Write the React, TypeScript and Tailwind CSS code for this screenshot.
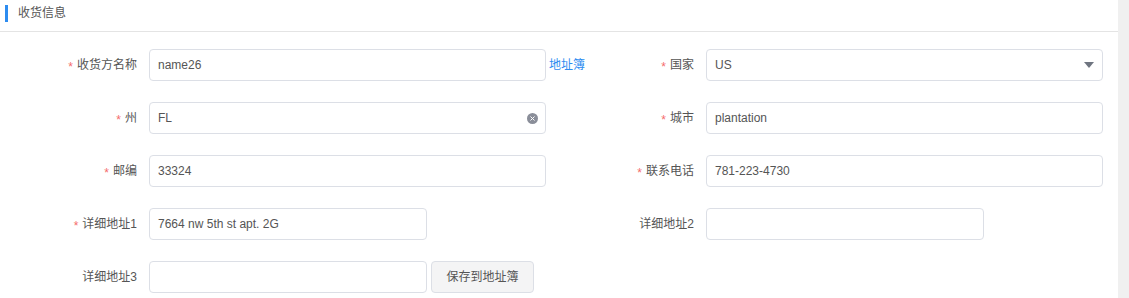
import React from 'react';

const Req = () => (
  <span className="mr-[4px] inline-block translate-y-[2px] text-[12px] leading-none text-[#f56c6c]">*</span>
);

interface FieldProps {
  label: string;
  required?: boolean;
  children: React.ReactNode;
}

const Field: React.FC<FieldProps> = ({ label, required, children }) => (
  <div className="flex h-[32px] items-center">
    <div className="w-[149px] shrink-0 pr-[12px] text-right text-[#555]">
      {required && <Req />}
      {label}
    </div>
    {children}
  </div>
);

const Box: React.FC<{ value?: string; half?: boolean; children?: React.ReactNode }> = ({ value, half, children }) => (
  <div
    className={
      'flex h-[32px] shrink-0 items-center justify-between rounded-[4px] border border-[#dcdfe6] bg-white pl-[8px] pr-[7px] text-[#555] ' +
      (half ? 'w-[278px]' : 'w-[397px]')
    }
  >
    <span>{value}</span>
    {children}
  </div>
);

const App: React.FC = () => {
  return (
    <div className="flex h-[298px] w-full bg-white font-['Liberation_Sans','Noto_Sans_CJK_SC',sans-serif] text-[12px]">
      <div className="min-w-0 flex-1">
        <div className="flex h-[32px] items-start border-b border-[#e4e4e4] pl-[5px] pt-[5px]">
          <div className="h-[17px] w-[3px] bg-[#2d8cf0]" />
          <span className="ml-[10px] leading-[17px] text-[#555]">收货信息</span>
        </div>

        <div className="grid grid-cols-[557px_557px] gap-y-[21px] pt-[17px]">
          <Field label="收货方名称" required>
            <Box value="name26" />
            <a className="ml-[3px] whitespace-nowrap text-[#2d8cf0]">地址簿</a>
          </Field>
          <Field label="国家" required>
            <Box value="US">
              <svg width="10" height="6" viewBox="0 0 10 6" className="mr-[1px]">
                <polygon points="0,0 10,0 5,6" fill="#6f7580" />
              </svg>
            </Box>
          </Field>

          <Field label="州" required>
            <Box value="FL">
              <span className="flex h-[11px] w-[11px] items-center justify-center rounded-full bg-[#8a8e99]">
                <svg width="5" height="5" viewBox="0 0 5 5">
                  <path d="M0.5 0.5 L4.5 4.5 M4.5 0.5 L0.5 4.5" stroke="#fff" strokeWidth="1" />
                </svg>
              </span>
            </Box>
          </Field>
          <Field label="城市" required>
            <Box value="plantation" />
          </Field>

          <Field label="邮编" required>
            <Box value="33324" />
          </Field>
          <Field label="联系电话" required>
            <Box value="781-223-4730" />
          </Field>

          <Field label="详细地址1" required>
            <Box value="7664 nw 5th st apt. 2G" half />
          </Field>
          <Field label="详细地址2">
            <Box half />
          </Field>

          <Field label="详细地址3">
            <Box half />
            <button className="ml-[4px] h-[32px] w-[103px] shrink-0 rounded-[4px] border border-[#dcdfe6] bg-[#f4f4f5] text-[12px] text-[#555]">
              保存到地址簿
            </button>
          </Field>
        </div>
      </div>
      <div className="w-[11px] shrink-0 bg-[#f0f0f0]" />
    </div>
  );
};

export default App;
